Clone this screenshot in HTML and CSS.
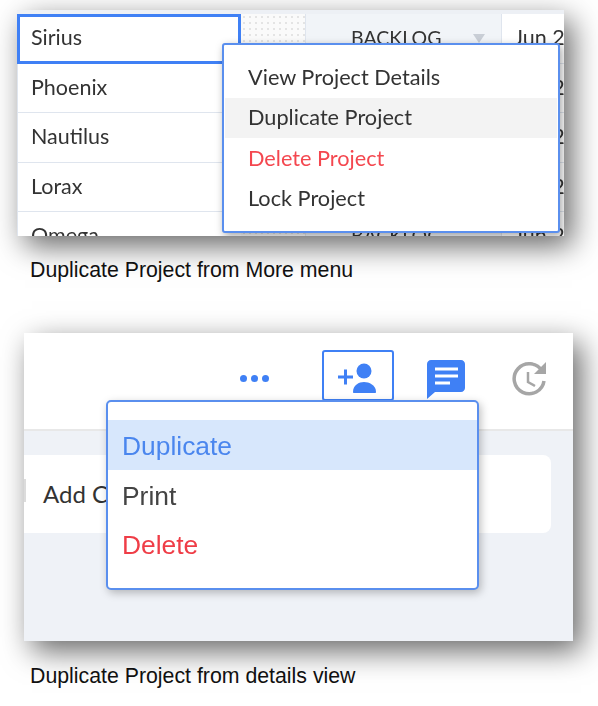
FILE: index.html
```html
<!DOCTYPE html>
<html lang="en">
<head>
    <meta charset="UTF-8">
    <title>Duplicate Project</title>
    <link rel="stylesheet" href="styles.css">
</head>
<body>
    <div class="shot shot-table">
        <div class="soft">
            <div class="table-top"></div>
            <div class="table">
                <div class="cell name selected">Sirius</div>
                <div class="cell dots"></div>
                <div class="cell status">BACKLOG<span class="arrow"></span></div>
                <div class="cell date">Jun 24</div>

                <div class="cell name">Phoenix</div>
                <div class="cell dots"></div>
                <div class="cell status">BACKLOG</div>
                <div class="cell date">Jun 24</div>

                <div class="cell name">Nautilus</div>
                <div class="cell dots"></div>
                <div class="cell status">BACKLOG</div>
                <div class="cell date">Jun 24</div>

                <div class="cell name">Lorax</div>
                <div class="cell dots"></div>
                <div class="cell status">BACKLOG</div>
                <div class="cell date">Jun 24</div>

                <div class="cell name">Omega</div>
                <div class="cell dots"></div>
                <div class="cell status">BACKLOG</div>
                <div class="cell date">Jun 24</div>
            </div>
            <div class="more-menu">
                <div class="more-item">View Project Details</div>
                <div class="more-item active">Duplicate Project</div>
                <div class="more-item danger">Delete Project</div>
                <div class="more-item">Lock Project</div>
            </div>
        </div>
    </div>
    <p class="caption caption-first">Duplicate Project from More menu</p>

    <div class="shot shot-details">
        <div class="soft">
            <div class="toolbar">
                <div class="more-dots"><span></span><span></span><span></span></div>
                <div class="add-user">
                    <svg width="42" height="40" viewBox="0 0 42 40">
                        <path d="M1 19h15M8.500 11.500v15" stroke="#3f80f5" stroke-width="3" fill="none"/>
                        <circle cx="27" cy="13" r="7.500" fill="#3f80f5"/>
                        <path d="M16 34c0-7 6-10 11-10s12 3 12 10c0 .8-.4 1-1 1H17c-.6 0-1-.2-1-1z" fill="#3f80f5"/>
                    </svg>
                </div>
                <svg class="chat" width="40" height="40" viewBox="0 0 40 40">
                    <path d="M5 1h30c2.200 0 4 1.800 4 4v24c0 2.200-1.800 4-4 4H9l-8 7V5c0-2.200 1.800-4 4-4z" fill="#3f80f5"/>
                    <path d="M9 10h23M9 17h23M9 24h15" stroke="#fff" stroke-width="3" fill="none"/>
                </svg>
                <svg class="history" width="38" height="38" viewBox="0 0 38 38">
                    <path d="M31 11A15 15 0 1 0 33 21" stroke="#a6a6a6" stroke-width="3.500" fill="none"/>
                    <path d="M35 2v12H23z" fill="#a6a6a6"/>
                    <path d="M17 12v10l7 4" stroke="#a6a6a6" stroke-width="2.500" fill="none"/>
                </svg>
            </div>
            <div class="details-body">
                <div class="add-card"><span class="card-tab"></span>Add Contact</div>
            </div>
            <div class="action-menu">
                <div class="action-item active">Duplicate</div>
                <div class="action-item">Print</div>
                <div class="action-item danger">Delete</div>
            </div>
        </div>
    </div>
    <p class="caption caption-second">Duplicate Project from details view</p>
</body>
</html>
```

FILE: styles.css
```css
body {
    margin: 0;
    background-color: white;
    font-family: "Liberation Sans", Arial, sans-serif;
    height: 706px;
    overflow: hidden;
}
.shot {
    position: relative;
    box-shadow: 8px 10px 28px rgba(0,0,0,0.6);
    background-color: white;
}
.soft {
    height: 100%;
    overflow: hidden;
    position: relative;
    filter: blur(0.5px);
}
.shot-table {
    width: 547px;
    height: 226px;
    margin: 10px 0 0 17px;
}
.shot-details {
    width: 549px;
    height: 308px;
    margin: 0 0 0 24px;
}
.caption {
    margin: 0 0 0 30px;
    font-size: 21.300px;
    line-height: 24px;
    color: #111;
}
.caption-first {
    margin-top: 22px;
    margin-bottom: 51px;
}
.caption-second {
    margin-top: 23px;
}

/* table shot */
.table-top {
    height: 4px;
    background-color: #edf0f5;
}
.table {
    display: grid;
    grid-template-columns: 224px 64px 197px 62px;
    grid-auto-rows: 49.500px;
    font-family: Lato, sans-serif;
    font-size: 21.500px;
    color: #333;
}
.cell {
    display: flex;
    align-items: center;
    border-bottom: 1px solid #dfe5ee;
    box-sizing: border-box;
    padding-bottom: 2px;
    white-space: nowrap;
    overflow: hidden;
}
.name {
    padding-left: 13px;
    border-left: 1px solid #dfe5ee;
}
.selected {
    border: 3px solid #3f80f5;
    padding-left: 11px;
    padding-bottom: 4px;
}
.dots {
    background-color: #fafafa;
    background-image: radial-gradient(#e4e4e4 1px, transparent 1px);
    background-size: 6px 6px;
}
.status {
    position: relative;
    padding-left: 45px;
    font-size: 19.500px;
    background-color: #f1f4f8;
    border-left: 1px solid #dfe5ee;
    border-right: 1px solid #dfe5ee;
}
.arrow {
    position: absolute;
    left: 167px;
    top: 20px;
    border-left: 6px solid transparent;
    border-right: 6px solid transparent;
    border-top: 9px solid #c9ced6;
}
.date {
    padding-left: 12px;
}
.more-menu {
    position: absolute;
    left: 205px;
    top: 33px;
    width: 338px;
    height: 190px;
    box-sizing: border-box;
    padding-top: 13px;
    background-color: white;
    border: 2px solid #5a8fee;
    border-radius: 3px;
    box-shadow: 2px 3px 8px rgba(0,0,0,0.35);
    font-family: Lato, sans-serif;
    font-size: 21.700px;
    color: #333;
}
.more-item {
    height: 40px;
    line-height: 38px;
    padding-left: 24px;
}
.more-item.active {
    background-color: #f3f3f3;
    margin: 0 1px;
    padding-left: 23px;
}
.more-item.danger {
    color: #f4474f;
    margin-top: 1px;
}

/* details shot */
.toolbar {
    height: 98px;
    box-sizing: border-box;
    border-bottom: 2px solid #e8e8e8;
    position: relative;
}
.more-dots {
    position: absolute;
    left: 216px;
    top: 42px;
    display: flex;
    gap: 4px;
}
.more-dots span {
    width: 7px;
    height: 7px;
    border-radius: 50%;
    background-color: #3f80f5;
}
.add-user {
    position: absolute;
    left: 298px;
    top: 17px;
    width: 72px;
    height: 51px;
    box-sizing: border-box;
    border: 2px solid #3f80f5;
    border-radius: 3px;
    padding: 6px 0 0 13px;
}
.chat {
    position: absolute;
    left: 402px;
    top: 26px;
}
.history {
    position: absolute;
    left: 487px;
    top: 27px;
}
.details-body {
    height: 210px;
    background-color: #eff2f7;
    padding-top: 24px;
    box-sizing: border-box;
}
.add-card {
    position: relative;
    width: 527px;
    height: 78px;
    line-height: 78px;
    box-sizing: border-box;
    padding-left: 19px;
    background-color: white;
    border-radius: 0 8px 8px 0;
    font-family: Lato, sans-serif;
    font-size: 24px;
    color: #333;
}
.card-tab {
    position: absolute;
    left: 0;
    top: 24px;
    width: 2px;
    height: 23px;
    background-color: #dcdcdc;
}
.action-menu {
    position: absolute;
    left: 82px;
    top: 67px;
    width: 373px;
    height: 190px;
    box-sizing: border-box;
    padding-top: 18px;
    background-color: white;
    border: 2px solid #5a8fee;
    border-radius: 5px;
    box-shadow: 2px 3px 8px rgba(0,0,0,0.25);
    font-size: 26.400px;
    color: #444;
}
.action-item {
    height: 49.500px;
    line-height: 52px;
    padding-left: 14px;
}
.action-item.active {
    background-color: #d7e7fc;
    color: #4a86ee;
}
.action-item.danger {
    color: #ef3d47;
}
```
